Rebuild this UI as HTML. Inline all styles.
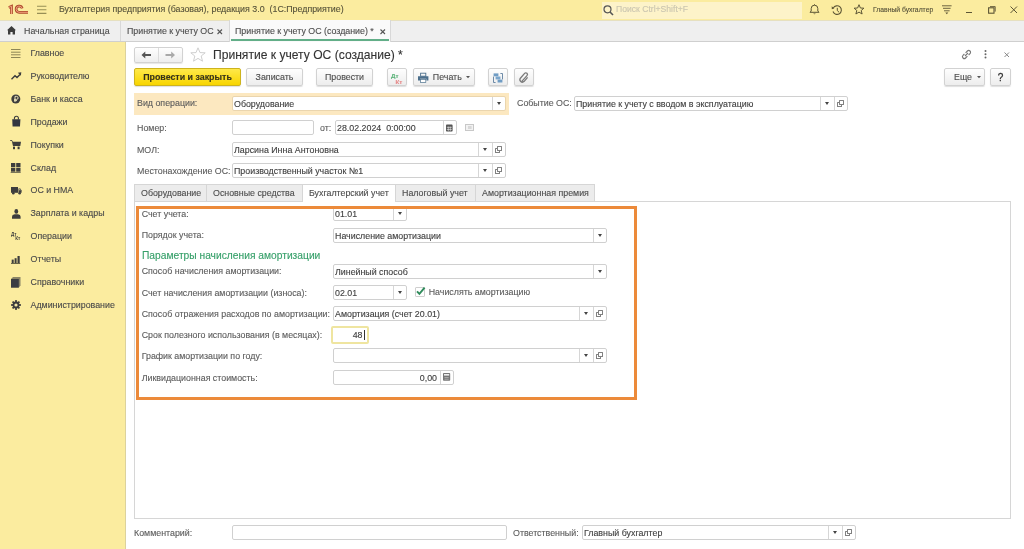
<!DOCTYPE html>
<html><head><meta charset="utf-8">
<style>
*,*:before,*:after{box-sizing:border-box;margin:0;padding:0}
html,body{width:1024px;height:549px;overflow:hidden;background:#fff;-webkit-font-smoothing:antialiased;-webkit-text-stroke-width:0.12px;font-family:"Liberation Sans",sans-serif;font-size:8.85px;color:#4d4d4d}
.a{position:absolute}
svg{position:absolute;overflow:visible}
.t{position:absolute;white-space:nowrap;line-height:1}
#top{left:0;top:0;width:1024px;height:20px;background:#fbec9f}
#tabs{left:0;top:20px;width:1024px;height:22px;background:#efefef;border-bottom:1px solid #cfcfcf;border-top:1px solid #e6e0c0}
#side{left:0;top:42px;width:126px;height:507px;background:#fbec9f;border-right:1px solid #dcd29c}
.btn{position:absolute;top:68px;height:18px;border:1px solid #d2d2d2;border-radius:2px;background:linear-gradient(#fefefe,#ededed);box-shadow:0 1px 1px rgba(0,0,0,.13);color:#4d4d4d;text-align:center;line-height:17px;white-space:nowrap}
.inp{position:absolute;height:15px;border:1px solid #d0d0d0;border-radius:2px;background:#fff;color:#404040;line-height:14px;padding-left:1px;white-space:nowrap}
.dd{position:absolute;top:0;width:14px;height:13px;border-left:1px solid #d6d6d6}
.dd:after{content:"";position:absolute;left:4px;top:5px;border-left:2.5px solid transparent;border-right:2.5px solid transparent;border-top:3px solid #444}
.op{position:absolute;top:0;width:14px;height:13px;border-left:1px solid #d6d6d6}
.op:before{content:"";position:absolute;left:2.5px;top:5px;width:5px;height:5px;border:1px solid #808080;border-radius:0.5px;background:#fff}
.op:after{content:"";position:absolute;left:4.7px;top:3px;width:5px;height:5px;border:1px solid #808080;border-radius:0.5px;background:#fff}
.lbl{position:absolute;white-space:nowrap;line-height:1;color:#5c5c5c}
.st{position:absolute;left:30.5px;white-space:nowrap;line-height:1;color:#4a4a4a}
.tab{position:absolute;top:184px;height:18px;background:#ececec;border:1px solid #d6d6d6;line-height:16px;padding-left:6px;white-space:nowrap;color:#4d4d4d}
</style></head><body><div style="position:absolute;left:0;top:0;width:1024px;height:549px;will-change:transform">
<!-- top bar -->
<div id="top" class="a">
  <svg style="left:0;top:0" width="30" height="20" viewBox="0 0 30 20">
    <g fill="none" stroke="#ad4a2b" stroke-width="2.7" stroke-linecap="butt">
      <path d="M8.8,7.4 L11.5,6.3 L11.5,14.1"/>
      <path d="M22.2,8.4 A3.1,3.1 0 1 0 19.1,12.3 L28,12.3"/>
    </g>
    <g fill="none" stroke="#f3a27f" stroke-width="1">
      <path d="M8.8,7.4 L11.5,6.3 L11.5,14.1"/>
      <path d="M22.2,8.4 A3.1,3.1 0 1 0 19.1,12.3 L28,12.3"/>
    </g>
  </svg>
  <svg style="left:37px;top:5px" width="10" height="10"><g stroke="#978e56" stroke-width="1.1"><path d="M0,1.3H9.4M0,4.8H9.4M0,8.4H9.4"/></g></svg>
  <div class="t" style="left:59px;top:5px;color:#57533a">Бухгалтерия предприятия (базовая), редакция 3.0&nbsp;&nbsp;(1С:Предприятие)</div>
  <div class="a" style="left:602px;top:2px;width:200px;height:17px;background:#fdf3c9"></div>
  <svg style="left:603px;top:5px" width="12" height="11"><circle cx="4.5" cy="4.3" r="3.5" fill="none" stroke="#555" stroke-width="1.2"/><path d="M7,7 L10,10" stroke="#555" stroke-width="1.6"/></svg>
  <div class="t" style="left:616px;top:5px;color:#cbc6b0;font-size:8.6px">Поиск Ctrl+Shift+F</div>
  <svg style="left:809px;top:4px" width="11" height="11" viewBox="0 0 11 11"><path d="M1,8.3 L2.2,7 L2.2,4.5 A3.3,3.3 0 0 1 8.8,4.5 L8.8,7 L10,8.3 Z" fill="none" stroke="#5c5535" stroke-width="1"/><path d="M4.3,9.6 A1.3,1 0 0 0 6.7,9.6" fill="#5c5535"/><path d="M5.5,0.3V1.2" stroke="#5c5535"/></svg>
  <svg style="left:831px;top:5px" width="12" height="11" viewBox="0 0 12 11"><path d="M2.3,3 A4.3,4.3 0 1 1 2,6.5" fill="none" stroke="#5c5535" stroke-width="1.1"/><path d="M0.7,1.2 L3.3,3.6 L0.8,4.2 Z" fill="#5c5535"/><path d="M6.3,2.8V5.6L8,7.2" fill="none" stroke="#5c5535" stroke-width="1"/></svg>
  <svg style="left:853px;top:4px" width="12" height="11" viewBox="0 0 12 11"><path d="M6,0.7 L7.4,4 L10.9,4.2 L8.2,6.5 L9.1,10 L6,8.1 L2.9,10 L3.8,6.5 L1.1,4.2 L4.6,4 Z" fill="none" stroke="#5c5535" stroke-width="1"/></svg>
  <div class="t" style="left:873px;top:7px;color:#57533a;font-size:6.8px">Главный бухгалтер</div>
  <svg style="left:942px;top:5px" width="10" height="10" viewBox="0 0 10 10"><path d="M0,0.8H9.6M1,3.3H8.6M2,5.8H7.6" stroke="#5c5535" stroke-width="0.9"/><path d="M3.3,7.5 L6.3,7.5 L4.8,9.2Z" fill="#5c5535"/></svg>
  <div class="a" style="left:966px;top:12px;width:6px;height:1px;background:#5c5535"></div>
  <svg style="left:988px;top:6px" width="8" height="8" viewBox="0 0 8 8"><rect x="0.6" y="1.8" width="5.4" height="5.4" fill="none" stroke="#5c5535" stroke-width="1.1"/><path d="M2,0.6H7.2V5.6" fill="none" stroke="#5c5535" stroke-width="0.9"/></svg>
  <svg style="left:1010px;top:6px" width="8" height="8" viewBox="0 0 8 8"><path d="M0.5,0.5L7,7M7,0.5L0.5,7" stroke="#5c5535" stroke-width="1"/></svg>
</div>
<!-- tab bar -->
<div id="tabs" class="a">
  <svg style="left:7px;top:4.5px" width="10" height="9" viewBox="0 0 10 9"><path d="M4.5,0 L9,4.2 L8,4.2 L8,8.6 L5.6,8.6 L5.6,6 L3.4,6 L3.4,8.6 L1,8.6 L1,4.2 L0,4.2 Z" fill="#3d3d3d"/></svg>
  <div class="t" style="left:24px;top:6px;color:#4d4d4d">Начальная страница</div>
  <div class="a" style="left:120px;top:0;width:1px;height:20px;background:#d8d8d8"></div>
  <div class="t" style="left:127px;top:6px;color:#4d4d4d">Принятие к учету ОС</div>
  <svg style="left:217px;top:8px" width="6" height="6"><path d="M0.5,0.5L5,5M5,0.5L0.5,5" stroke="#555" stroke-width="1.1"/></svg>
  <div class="a" style="left:229px;top:-1px;width:162px;height:22px;background:#fafafa;border-left:1px solid #d8d8d8;border-right:1px solid #d8d8d8"></div>
  <div class="a" style="left:231px;top:18px;width:158px;height:1.5px;background:#62ae88"></div>
  <div class="t" style="left:235px;top:6px;color:#4d4d4d">Принятие к учету ОС (создание) *</div>
  <svg style="left:380px;top:8px" width="6" height="6"><path d="M0.5,0.5L5,5M5,0.5L0.5,5" stroke="#555" stroke-width="1.1"/></svg>
</div>
<!-- sidebar -->
<div id="side" class="a">
  <svg style="left:11px;top:7px" width="10" height="10"><path d="M0,0.5H9.5M0,3.2H9.5M0,5.8H9.5M0,8.5H9.5" stroke="#8f8756" stroke-width="1"/></svg>
  <div class="st" style="top:7px">Главное</div>
  <svg style="left:11px;top:30px" width="11" height="8" viewBox="0 0 11 8"><path d="M0.5,7.2 L4,3.8 L6,5.6 L9,2.6" fill="none" stroke="#3d3d3d" stroke-width="1.4"/><path d="M6.8,0.8 L10.3,0.3 L9.9,3.8Z" fill="#3d3d3d"/></svg>
  <div class="st" style="top:30px">Руководителю</div>
  <svg style="left:11px;top:52px" width="10" height="10" viewBox="0 0 10 10"><circle cx="4.8" cy="5" r="4.5" fill="#3d3d3d"/><path d="M4,8 V2.4 H5.6 A1.5,1.5 0 0 1 5.6,5.4 H3 M3,6.6H6" fill="none" stroke="#e8e0b8" stroke-width="1"/></svg>
  <div class="st" style="top:53px">Банк и касса</div>
  <svg style="left:12px;top:74px" width="9" height="11" viewBox="0 0 9 11"><path d="M2.4,3.5 V2.2 A2,2 0 0 1 6.4,2.2 V3.5" fill="none" stroke="#3d3d3d" stroke-width="1.1"/><path d="M0.2,3.3 H8.4 L8,10.5 H0.6Z" fill="#333640"/></svg>
  <div class="st" style="top:76px">Продажи</div>
  <svg style="left:10px;top:98px" width="12" height="10" viewBox="0 0 12 10"><path d="M0.3,0.5 H1.8 L2.5,1.8" fill="none" stroke="#3d3d3d" stroke-width="1"/><path d="M2,1.8 H11 L10.3,6 H3Z" fill="#3d3d3d"/><rect x="3" y="6.6" width="2" height="2.6" fill="#3d3d3d"/><rect x="7.6" y="6.6" width="2" height="2.6" fill="#3d3d3d"/></svg>
  <div class="st" style="top:99px">Покупки</div>
  <svg style="left:11px;top:121px" width="10" height="10" viewBox="0 0 10 10"><rect x="0" y="0" width="4.3" height="4.2" fill="#3d3d3d"/><rect x="5.2" y="0" width="4.3" height="4.2" fill="#3d3d3d"/><rect x="0" y="4.9" width="4.3" height="3.8" fill="#3d3d3d"/><rect x="5.2" y="4.9" width="4.3" height="3.8" fill="#3d3d3d"/><rect x="-0.3" y="8.9" width="10" height="1" fill="#6d6a50"/></svg>
  <div class="st" style="top:122px">Склад</div>
  <svg style="left:11px;top:145px" width="11" height="8" viewBox="0 0 11 8"><rect x="0" y="0" width="7" height="5.8" fill="#3d3d3d"/><path d="M7.5,1.5 H9.3 L10.6,3.4 V5.8 H7.5Z" fill="#3d3d3d"/><circle cx="2.3" cy="6.3" r="1.3" fill="#3d3d3d"/><circle cx="8.6" cy="6.3" r="1.3" fill="#3d3d3d"/><path d="M8.2,2.2H9L9.8,3.3H8.2Z" fill="#e9e0b0"/></svg>
  <div class="st" style="top:144px">ОС и НМА</div>
  <svg style="left:12px;top:167px" width="9" height="10" viewBox="0 0 9 10"><ellipse cx="4.3" cy="2.4" rx="1.9" ry="2.3" fill="#3d3d3d"/><path d="M0,9.8 V7.8 Q0,5.4 2.6,5.2 H6 Q8.6,5.4 8.6,7.8 V9.8Z" fill="#3d3d3d"/></svg>
  <div class="st" style="top:167px">Зарплата и кадры</div>
  <div class="t" style="left:11px;top:190.6px;font-size:4.6px;font-weight:bold;color:#3d3d3d;-webkit-text-stroke-width:0">Дт</div>
  <div class="t" style="left:15.2px;top:194.8px;font-size:4.6px;font-weight:bold;color:#3d3d3d;-webkit-text-stroke-width:0">Кт</div>
  <div class="st" style="top:190px">Операции</div>
  <svg style="left:11px;top:214px" width="10" height="8" viewBox="0 0 10 8"><rect x="0.7" y="3.6" width="2" height="3.8" fill="#3d3d3d"/><rect x="3.6" y="2.2" width="2" height="5.2" fill="#3d3d3d"/><rect x="6.5" y="0" width="2.2" height="7.4" fill="#3d3d3d"/><rect x="0" y="7" width="9.2" height="1" fill="#6a6648"/></svg>
  <div class="st" style="top:213px">Отчеты</div>
  <svg style="left:11px;top:235px" width="10" height="11" viewBox="0 0 10 11"><path d="M2,0 H9.5 V8.5 L7.8,10.6 H0 V2Z" fill="#8a8466"/><rect x="0" y="2" width="7.8" height="8.6" fill="#3b3d42"/></svg>
  <div class="st" style="top:236px">Справочники</div>
  <svg style="left:11px;top:258px" width="10" height="10" viewBox="-5 -5 10 10"><g fill="#3d3d3d"><circle r="3.4"/><rect x="-0.9" y="-4.9" width="1.8" height="2" transform="rotate(0)"/><rect x="-0.9" y="-4.9" width="1.8" height="2" transform="rotate(45)"/><rect x="-0.9" y="-4.9" width="1.8" height="2" transform="rotate(90)"/><rect x="-0.9" y="-4.9" width="1.8" height="2" transform="rotate(135)"/><rect x="-0.9" y="-4.9" width="1.8" height="2" transform="rotate(180)"/><rect x="-0.9" y="-4.9" width="1.8" height="2" transform="rotate(225)"/><rect x="-0.9" y="-4.9" width="1.8" height="2" transform="rotate(270)"/><rect x="-0.9" y="-4.9" width="1.8" height="2" transform="rotate(315)"/></g><circle r="1.6" fill="#f3e6a8"/></svg>
  <div class="st" style="top:259px">Администрирование</div>
</div>
<!-- main header -->
<div class="a" style="left:134px;top:47px;width:49px;height:16px;border:1px solid #d2d2d2;border-radius:2px;background:linear-gradient(#fefefe,#eeeeee);box-shadow:0 1px 1px rgba(0,0,0,.1)"></div>
<div class="a" style="left:158px;top:48px;width:1px;height:14px;background:#dcdcdc"></div>
<svg style="left:141px;top:51px" width="11" height="8" viewBox="0 0 11 8"><path d="M0.5,4 L4.3,0.6 V2.9 H10 V5.1 H4.3 V7.4Z" fill="#555"/></svg>
<svg style="left:165px;top:51px" width="11" height="8" viewBox="0 0 11 8"><path d="M10,4 L6.2,0.6 V2.9 H0.5 V5.1 H6.2 V7.4Z" fill="#a9a9a9"/></svg>
<svg style="left:190px;top:47px" width="16" height="15" viewBox="0 0 16 15"><path d="M8,0.8 L10,5.6 L15.2,5.8 L11.2,9 L12.5,14.2 L8,11.4 L3.5,14.2 L4.8,9 L0.8,5.8 L6,5.6 Z" fill="none" stroke="#c9c9c9" stroke-width="0.9"/></svg>
<div class="t" style="left:213px;top:49px;font-size:12.1px;color:#333">Принятие к учету ОС (создание) *</div>
<svg style="left:961px;top:49px" width="11" height="11" viewBox="0 0 11 11"><g fill="none" stroke="#777" stroke-width="1.1"><path d="M4.6,3.8 L6.4,2 A1.8,1.8 0 0 1 9,4.6 L7.6,6"/><path d="M6.4,7.2 L4.6,9 A1.8,1.8 0 0 1 2,6.4 L3.4,5"/><path d="M4,7 L7,4"/></g></svg>
<svg style="left:984px;top:50px" width="3" height="9"><circle cx="1.5" cy="1" r="1" fill="#666"/><circle cx="1.5" cy="4.3" r="1" fill="#666"/><circle cx="1.5" cy="7.6" r="1" fill="#666"/></svg>
<svg style="left:1004px;top:52px" width="6" height="6"><path d="M0.5,0.5L5,5M5,0.5L0.5,5" stroke="#888" stroke-width="1"/></svg>

<!-- toolbar -->
<div class="btn" style="left:134px;width:107px;background:linear-gradient(#ffe94a,#f8d500);border-color:#cdb31e;color:#35321a;font-weight:bold">Провести и закрыть</div>
<div class="btn" style="left:246px;width:57px">Записать</div>
<div class="btn" style="left:316px;width:57px">Провести</div>
<div class="btn" style="left:387px;width:20px"></div>
<div class="t" style="left:391px;top:72.5px;font-size:6.2px;font-weight:bold;color:#5cb47a">Дт</div>
<div class="t" style="left:395.5px;top:78.5px;font-size:6.2px;font-weight:bold;color:#e58a8a">Кт</div>
<div class="btn" style="left:413px;width:62px;text-align:left;padding-left:18.8px">Печать</div>
<svg style="left:418px;top:73px" width="11" height="10" viewBox="0 0 11 10"><rect x="2.6" y="0.2" width="5.2" height="3" fill="none" stroke="#4b6f8c" stroke-width="0.9"/><path d="M0,3.3 H10.4 V7.5 H8.4 V5.8 H2 V7.5 H0Z" fill="#4b6f8c"/><rect x="2.6" y="6.4" width="5.2" height="3.2" fill="#fff" stroke="#4b6f8c" stroke-width="0.7"/></svg>
<svg style="left:466px;top:76px" width="4" height="3"><path d="M0,0H4L2,2.3Z" fill="#555"/></svg>
<div class="btn" style="left:488px;width:20px"></div>
<svg style="left:493px;top:73px" width="10" height="10" viewBox="0 0 10 10"><path d="M0.5,3.6 V9.5 H2.6 M9.5,6.4 V0.5 H7.4" fill="none" stroke="#5f7f9f" stroke-width="0.9"/><rect x="0.6" y="0.4" width="4.8" height="2.9" fill="#6f9cc4"/><rect x="2.6" y="3.5" width="4.8" height="2.9" fill="#7aa6cc"/><rect x="4.6" y="6.6" width="4.8" height="2.9" fill="#6f9cc4"/></svg>
<div class="btn" style="left:514px;width:20px"></div>
<svg style="left:519px;top:72px" width="10" height="11" viewBox="0 0 10 11"><path d="M2.8,9.4 L8,3.6 A1.6,1.6 0 0 0 5.6,1.4 L1.4,6.2 A2.5,2.5 0 0 0 5,9.6 L8.6,5.4" fill="none" stroke="#7a7a7a" stroke-width="1.3"/></svg>
<div class="btn" style="left:944px;width:41px;text-align:left;padding-left:9px">Еще</div>
<svg style="left:977px;top:76px" width="4" height="3"><path d="M0,0H4L2,2.3Z" fill="#555"/></svg>
<div class="btn" style="left:990px;width:21px;font-size:10px;color:#333;-webkit-text-stroke-width:0.3px">?</div>

<!-- header form -->
<div class="a" style="left:134px;top:93px;width:375px;height:22px;background:#fce8c0"></div>
<div class="lbl" style="left:137px;top:99px">Вид операции:</div>
<div class="inp" style="left:232px;top:96px;width:274px;border-color:#ead5ae">Оборудование<div class="dd" style="left:259px"></div></div>
<div class="lbl" style="left:517px;top:99px">Событие ОС:</div>
<div class="inp" style="left:574px;top:96px;width:274px">Принятие к учету с вводом в эксплуатацию<div class="dd" style="left:245px"></div><div class="op" style="left:258.5px"></div></div>

<div class="lbl" style="left:137px;top:124px">Номер:</div>
<div class="inp" style="left:232px;top:120px;width:82px"></div>
<div class="lbl" style="left:320px;top:124px">от:</div>
<div class="inp" style="left:335px;top:120px;width:122px">28.02.2024&nbsp;&nbsp;0:00:00<div class="a" style="left:107px;top:0;width:14px;height:13px;border-left:1px solid #d6d6d6"></div></div>
<svg style="left:446px;top:124px" width="7" height="8" viewBox="0 0 7 8"><rect x="0" y="0.6" width="6.6" height="7" rx="0.8" fill="#555"/><path d="M0.8,3.3H5.8M0.8,5.4H5.8" stroke="#fff" stroke-width="0.6"/><path d="M2.3,2.6V7M4.3,2.6V7" stroke="#fff" stroke-width="0.5"/></svg>
<svg style="left:465px;top:124px" width="9" height="7"><rect x="0.5" y="0.5" width="8" height="6" fill="#f2f2f2" stroke="#c8c8c8" stroke-width="1"/><rect x="3" y="2" width="3.6" height="3" fill="#d8d8d8"/></svg>

<div class="lbl" style="left:137px;top:146px">МОЛ:</div>
<div class="inp" style="left:232px;top:142px;width:274px">Ларсина Инна Антоновна<div class="dd" style="left:245px"></div><div class="op" style="left:258.5px"></div></div>
<div class="lbl" style="left:137px;top:167px">Местонахождение ОС:</div>
<div class="inp" style="left:232px;top:163px;width:274px">Производственный участок №1<div class="dd" style="left:245px"></div><div class="op" style="left:258.5px"></div></div>

<!-- tabs -->
<div class="a" style="left:134px;top:201px;width:877px;height:318px;border:1px solid #d6d6d6"></div>
<div class="tab" style="left:134px;width:73px">Оборудование</div>
<div class="tab" style="left:206px;width:97px">Основные средства</div>
<div class="tab" style="left:302px;top:184px;width:94px;height:18px;line-height:17px;background:#fff;border-bottom:none">Бухгалтерский учет</div>
<div class="tab" style="left:395px;width:81px">Налоговый учет</div>
<div class="tab" style="left:475px;width:120px">Амортизационная премия</div>

<div class="inp" style="left:333px;top:206px;width:74px">01.01<div class="dd" style="left:59px"></div></div>
<div class="a" style="left:136px;top:206px;width:501px;height:194px;border:3px solid #ec8a3a"></div>
<div class="lbl" style="left:141.7px;top:210px">Счет учета:</div>
<div class="lbl" style="left:141.7px;top:231px">Порядок учета:</div>
<div class="inp" style="left:333px;top:228px;width:274px">Начисление амортизации<div class="dd" style="left:259px"></div></div>
<div class="t" style="left:142px;top:250.5px;font-size:10.25px;color:#37a06a">Параметры начисления амортизации</div>
<div class="lbl" style="left:141.7px;top:266.5px">Способ начисления амортизации:</div>
<div class="inp" style="left:333px;top:264px;width:274px">Линейный способ<div class="dd" style="left:259px"></div></div>
<div class="lbl" style="left:141.7px;top:288.5px">Счет начисления амортизации (износа):</div>
<div class="inp" style="left:333px;top:285px;width:74px">02.01<div class="dd" style="left:59px"></div></div>
<div class="a" style="left:415px;top:287px;width:10px;height:10px;border:1px solid #cfcfcf;border-radius:1px;background:#fff"></div>
<svg style="left:416px;top:287px" width="10" height="8" viewBox="0 0 10 8"><path d="M1,4.3 L3.4,6.9 L8.6,0.6" fill="none" stroke="#2f8b5b" stroke-width="1.9"/></svg>
<div class="lbl" style="left:428.7px;top:288px">Начислять амортизацию</div>
<div class="lbl" style="left:141.7px;top:310px">Способ отражения расходов по амортизации:</div>
<div class="inp" style="left:333px;top:306px;width:274px">Амортизация (счет 20.01)<div class="dd" style="left:245px"></div><div class="op" style="left:258.5px"></div></div>
<div class="lbl" style="left:141.7px;top:331px">Срок полезного использования (в месяцах):</div>
<div class="inp" style="left:331px;top:326px;width:38px;height:18px;border:2px solid #efe5a0;text-align:right;padding-right:4.5px;line-height:14px">48</div><div class="a" style="left:363.5px;top:329.5px;width:1px;height:10.5px;background:#333"></div>
<div class="lbl" style="left:141.7px;top:352px">График амортизации по году:</div>
<div class="inp" style="left:333px;top:348px;width:274px"><div class="dd" style="left:245px"></div><div class="op" style="left:258.5px"></div></div>
<div class="lbl" style="left:141.7px;top:374px">Ликвидационная стоимость:</div>
<div class="inp" style="left:333px;top:370px;width:121px;text-align:right;padding-right:16px">0,00<div class="a" style="left:106px;top:0;width:14px;height:13px;border-left:1px solid #d6d6d6"></div></div>
<svg style="left:443px;top:373px" width="8" height="8" viewBox="0 0 8 8"><rect x="0" y="0" width="7.2" height="7.8" rx="0.8" fill="#777"/><rect x="1" y="1" width="5.2" height="1.6" fill="#eee"/><path d="M1.5,4.5H5.7M1.5,6.2H5.7" stroke="#ddd" stroke-width="0.5"/></svg>

<!-- bottom -->
<div class="lbl" style="left:134px;top:529px">Комментарий:</div>
<div class="inp" style="left:232px;top:525px;width:275px"></div>
<div class="lbl" style="left:513px;top:529px">Ответственный:</div>
<div class="inp" style="left:582px;top:525px;width:274px">Главный бухгалтер<div class="dd" style="left:245px"></div><div class="op" style="left:258.5px"></div></div>
</div></body></html>
